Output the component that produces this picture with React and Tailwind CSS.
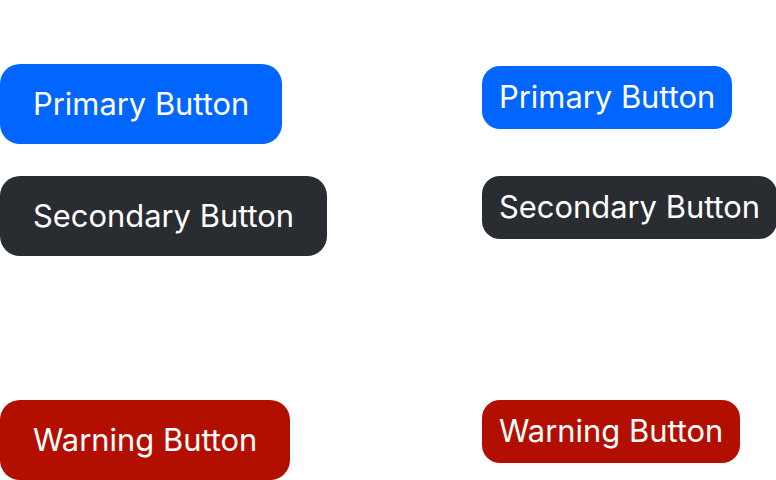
export default function App() {
  const font = { fontFamily: "Inter, 'Noto Sans', sans-serif" };
  return (
    <div className="w-[776px] h-[480px] bg-white overflow-hidden" style={font}>
      <div className="grid grid-cols-[482px_1fr]">
        {/* large variants */}
        <div className="flex flex-col">
          <div className="h-[64px] pl-[25px] pt-[2px] text-[22px] text-white">Large Buttons</div>
          <div className="flex flex-col items-start gap-[32px]">
            <button className="h-[80px] px-[33px] rounded-[20px] bg-[#0066ff] text-white text-[30.9px] leading-none whitespace-nowrap">Primary Button</button>
            <button className="h-[80px] px-[33px] rounded-[20px] bg-[#292c31] text-white text-[30.9px] leading-none whitespace-nowrap">Secondary Button</button>
            <button className="h-[80px] px-[33px] rounded-[20px] bg-white text-white text-[30.9px] leading-none whitespace-nowrap">Tertiary Button</button>
            <button className="h-[80px] px-[33px] rounded-[20px] bg-[#b20f00] text-white text-[30.9px] leading-none whitespace-nowrap">Warning Button</button>
          </div>
        </div>
        {/* compact variants */}
        <div className="flex flex-col">
          <div className="h-[66px] pl-[2px] pt-[2px] text-[22px] text-white">Small Buttons</div>
          <div className="flex flex-col items-start">
            <button className="h-[63px] px-[17px] rounded-[18px] bg-[#0066ff] text-white text-[30.9px] leading-none whitespace-nowrap">Primary Button</button>
            <button className="mt-[47px] h-[63px] px-[17px] rounded-[18px] bg-[#292c31] text-white text-[30.9px] leading-none whitespace-nowrap">Secondary Button</button>
            <button className="mt-[49px] h-[63px] px-[17px] rounded-[18px] bg-white text-white text-[30.9px] leading-none whitespace-nowrap">Tertiary Button</button>
            <button className="mt-[49px] h-[63px] px-[17px] rounded-[18px] bg-[#b20f00] text-white text-[30.9px] leading-none whitespace-nowrap">Warning Button</button>
          </div>
        </div>
      </div>
    </div>
  );
}
